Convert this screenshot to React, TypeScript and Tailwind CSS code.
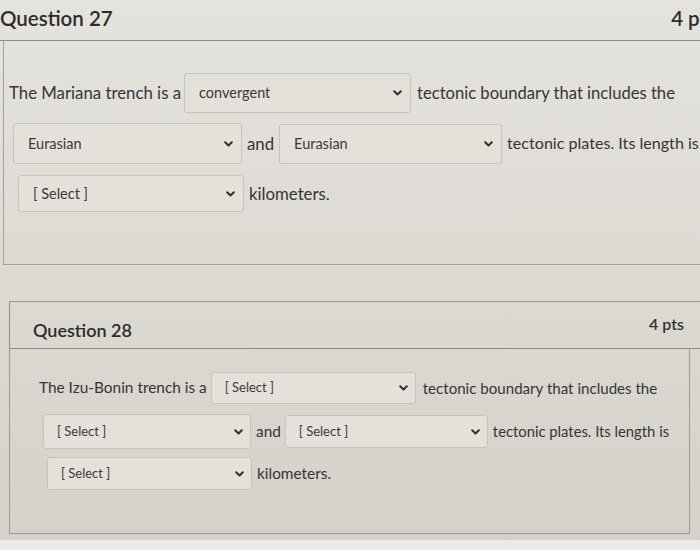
import React from "react";

function Chevron() {
  return (
    <svg width="9" height="6" viewBox="0 0 9 6" className="shrink-0">
      <path d="M1.2 1.2 L4.5 4.5 L7.8 1.2" fill="none" stroke="#2f2f2f" strokeWidth="2" strokeLinecap="round" strokeLinejoin="round" />
    </svg>
  );
}

function Sel({ text, w, h, size, cls }: { text: string; w: number; h: number; size: "a" | "b"; cls?: string }) {
  return (
    <div
      className={`flex items-center justify-between shrink-0 rounded-[3px] border border-[#c6c3bc] bg-[#e4e1db] ${size === "a" ? "pl-[14px] pr-[8px] text-[14.5px]" : "pl-[13px] pr-[7px] text-[13px]"} text-[#3a3a3a] ${cls ?? ""}`}
      style={{ width: w, height: h }}
    >
      <span>{text}</span>
      <Chevron />
    </div>
  );
}

export default function App() {
  return (
    <div
      className="w-[700px] h-[550px] overflow-hidden bg-linear-to-b from-[#e5e3de] via-[#dddad4] to-[#d4d1ca] text-[#353535] relative"
      style={{ fontFamily: "Lato, 'Open Sans', sans-serif" }}
    >
      {/* Question 27 */}
      <div className="w-[740px]">
        <div className="h-[41px] border-b border-[#8e8c87] flex items-center justify-between pr-[24px]">
          <span className="text-[20.5px] font-semibold text-[#2c2c2c] -mt-[4px]">Question 27</span>
          <span className="text-[20.5px] font-semibold text-[#2c2c2c] -mt-[4px]">4 pts</span>
        </div>
        <div className="ml-[3px] border-l border-b border-[#a4a19b] pt-[32px] pb-[52px] text-[16.8px]">
          <div className="flex items-center pl-[5px]">
            <span>The Mariana trench is a</span>
            <Sel text="convergent" w={227} h={40} size="a" cls="ml-[3px] mr-[6px]" />
            <span className="text-[16.6px]">tectonic boundary that includes the</span>
          </div>
          <div className="flex items-center pl-[9px] mt-[10px]">
            <Sel text="Eurasian" w={229} h={41} size="a" cls="mr-[5px]" />
            <span>and</span>
            <Sel text="Eurasian" w={223} h={40} size="a" cls="ml-[5px] mr-[5px]" />
            <span className="text-[16.1px]">tectonic plates. Its length is</span>
          </div>
          <div className="flex items-center pl-[14px] mt-[11px]">
            <Sel text="[ Select ]" w={226} h={37} size="a" cls="mr-[5px]" />
            <span>kilometers.</span>
          </div>
        </div>
      </div>

      {/* Question 28 */}
      <div className="mt-[36px] ml-[9px] w-[740px] border-t border-[#9a9892]">
        <div className="h-[47px] border-l border-b border-[#8e8c87] flex items-start justify-between pr-[65px]">
          <span className="text-[18px] font-semibold text-[#2c2c2c] pl-[23px] pt-[15px]">Question 28</span>
          <span className="text-[16px] font-semibold text-[#333] pt-[10px]">4 pts</span>
        </div>
        <div className="w-[681px] border-l border-r border-b border-[#9d9a94] pt-[23px] pb-[43px] text-[15.4px]">
          <div className="flex items-center pl-[29px]">
            <span>The Izu-Bonin trench is a</span>
            <Sel text="[ Select ]" w={205} h={32} size="b" cls="ml-[4px] mr-[7px]" />
            <span className="text-[15.1px]">tectonic boundary that includes the</span>
          </div>
          <div className="flex items-center pl-[33px] mt-[10px]">
            <Sel text="[ Select ]" w={208} h={35} size="b" cls="mr-[5px]" />
            <span>and</span>
            <Sel text="[ Select ]" w={203} h={33} size="b" cls="ml-[4px] mr-[5px]" />
            <span className="text-[14.8px]">tectonic plates. Its length is</span>
          </div>
          <div className="flex items-center pl-[37px] mt-[8px]">
            <Sel text="[ Select ]" w={205} h={33} size="b" cls="mr-[5px]" />
            <span>kilometers.</span>
          </div>
        </div>
      </div>

      <div className="absolute left-0 bottom-0 w-full h-[10px] bg-[#ebe9e5]" />
    </div>
  );
}
